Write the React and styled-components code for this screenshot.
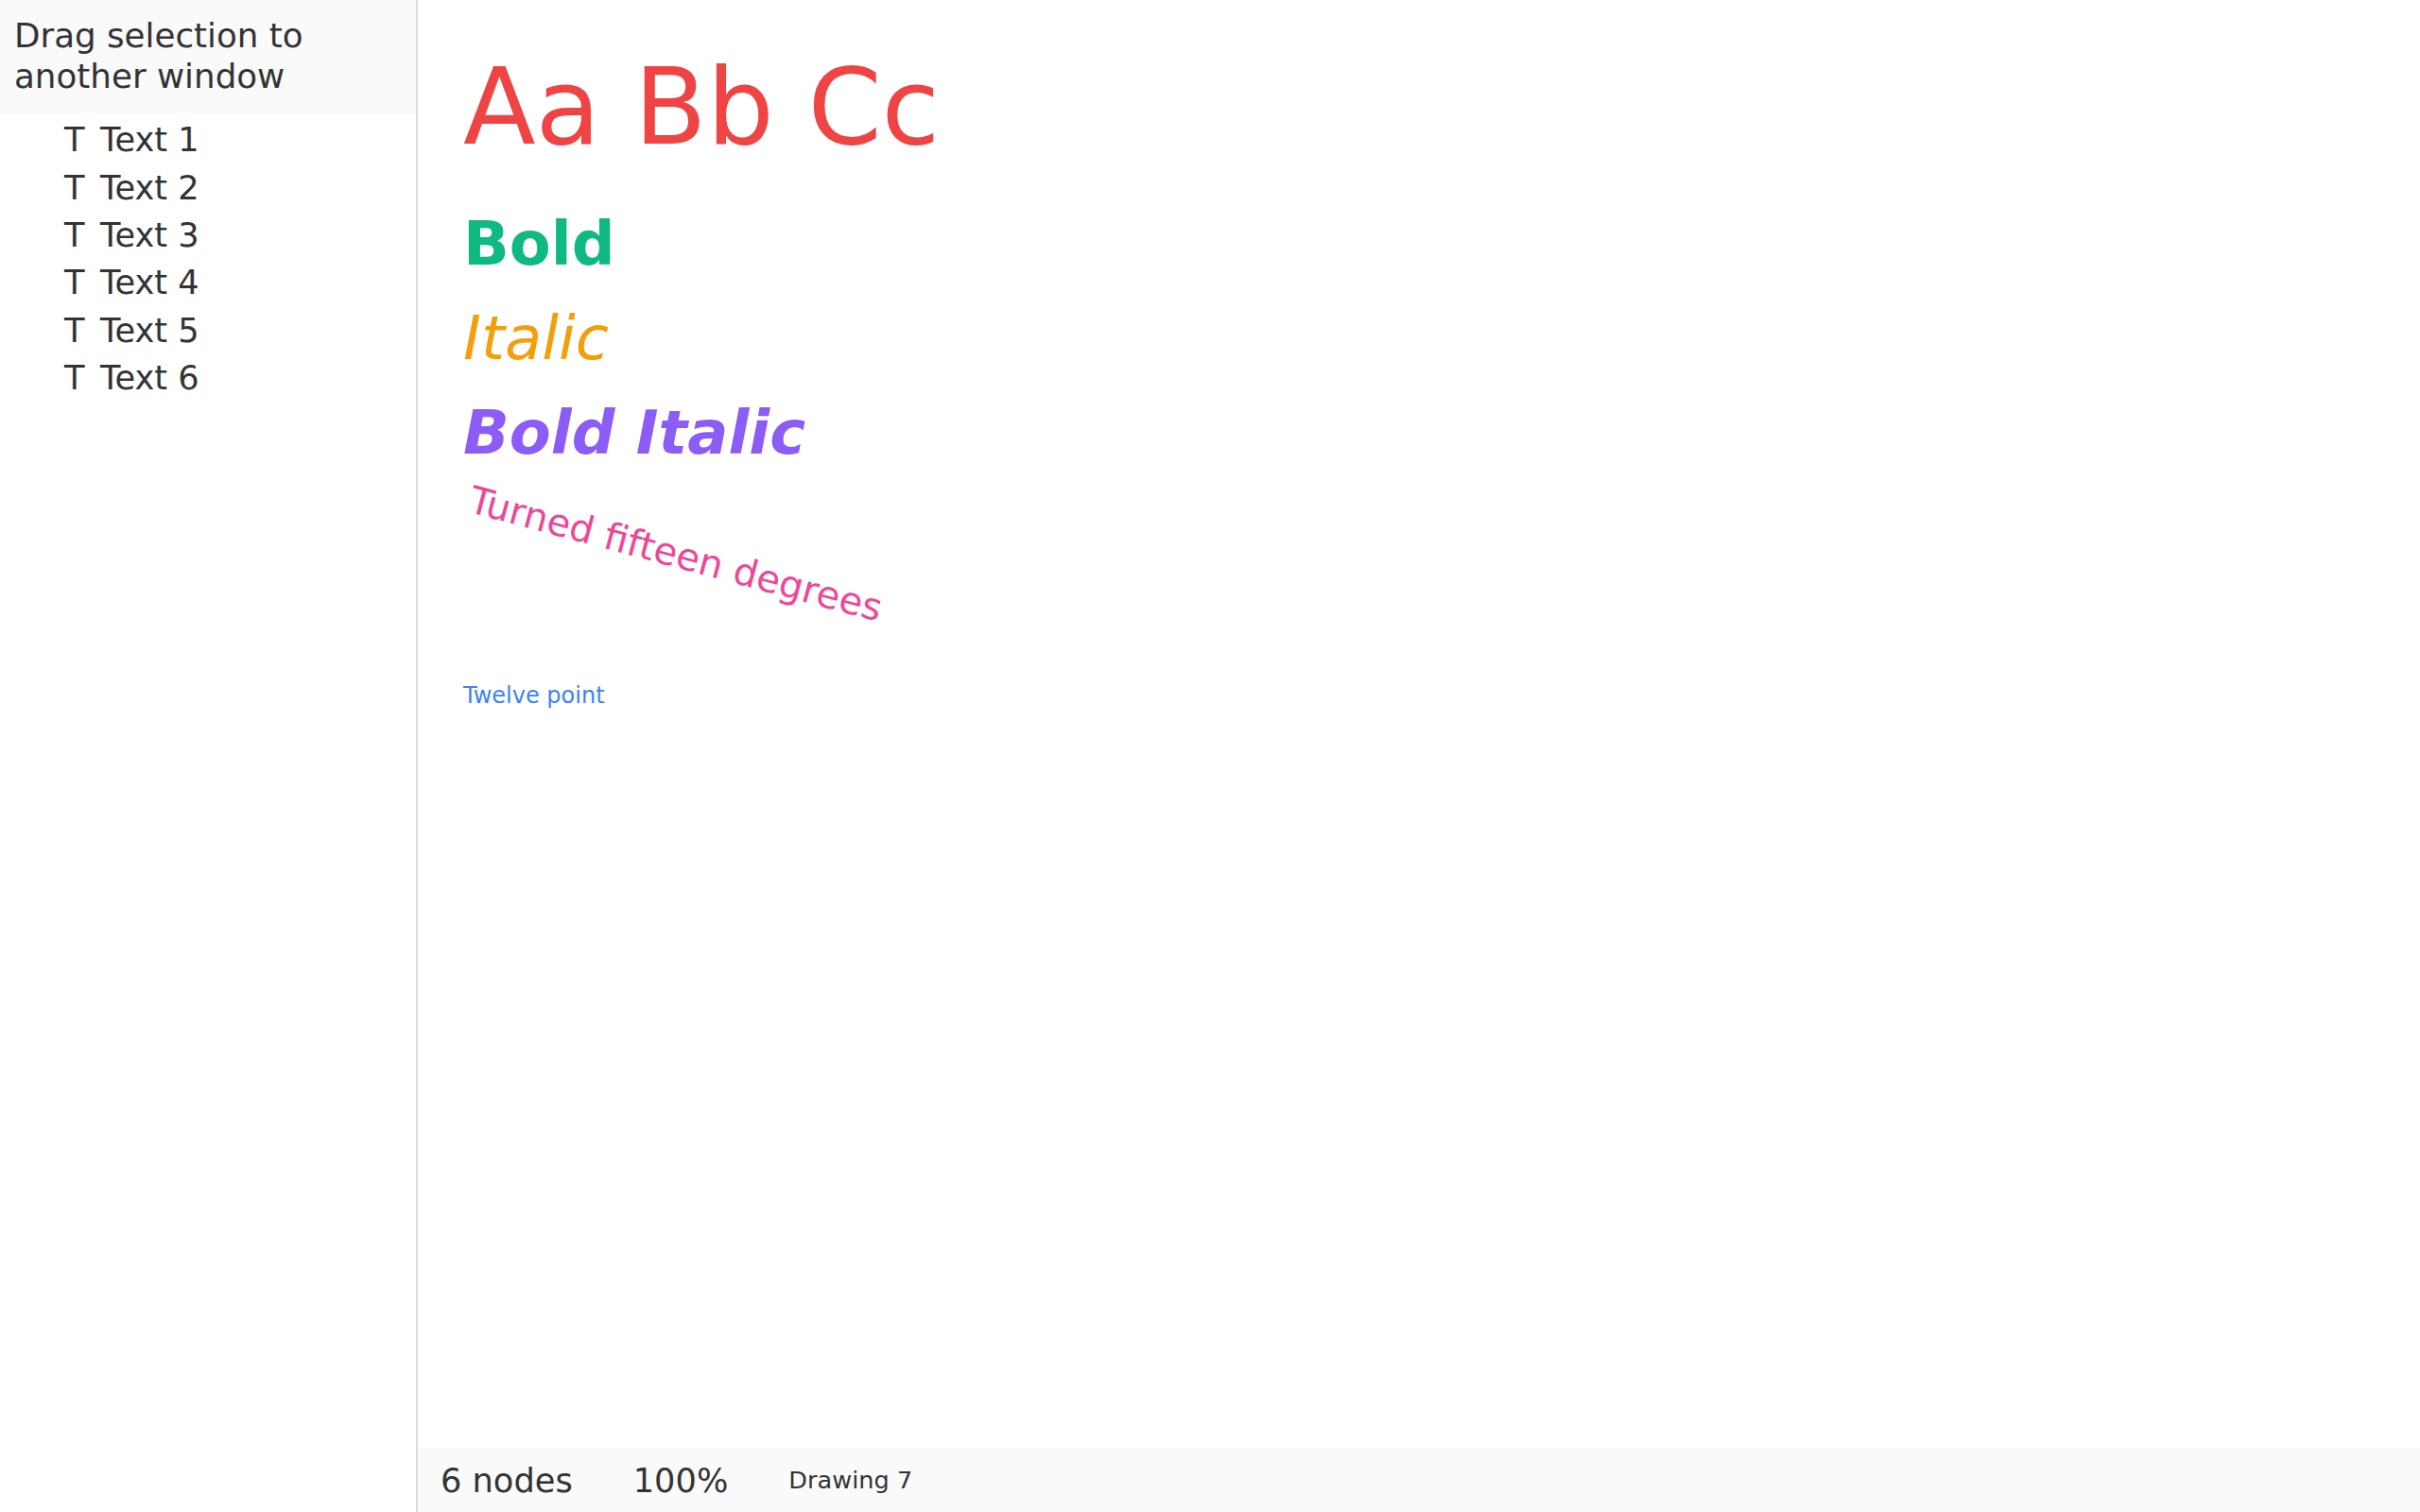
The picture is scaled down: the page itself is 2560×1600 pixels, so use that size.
import React from 'react';
import styled, { createGlobalStyle } from 'styled-components';

const GlobalStyle = createGlobalStyle`
  html, body {
    margin: 0;
    padding: 0;
    height: 100%;
  }
  body {
    font-family: "DejaVu Sans", "Noto Sans", sans-serif;
    color: #333;
    background: #fff;
  }
  #root {
    height: 100%;
  }
`;

const nodes = [
  { id: 1, text: 'Aa Bb Cc', color: '#ef4444', size: 112, x: 48, y: 48 },
  { id: 2, text: 'Bold', color: '#10b981', size: 64, x: 48, y: 221, weight: 700 },
  { id: 3, text: 'Italic', color: '#f59e0b', size: 64, x: 48, y: 321, italic: true },
  { id: 4, text: 'Bold Italic', color: '#8b5cf6', size: 64, x: 48, y: 421, weight: 700, italic: true },
  { id: 5, text: 'Turned fifteen degrees', color: '#ec4899', size: 40, x: 48, y: 563, rotate: 15 },
  { id: 6, text: 'Twelve point', color: '#3b82f6', size: 24, x: 48, y: 722 },
];

const Shell = styled.div`
  display: flex;
  width: 100vw;
  height: 100vh;
  overflow: hidden;
`;

const Sidebar = styled.aside`
  width: 440px;
  flex-shrink: 0;
  border-right: 2px solid #dcdcdc;
  display: flex;
  flex-direction: column;
`;

const DragHint = styled.div`
  height: 120px;
  box-sizing: border-box;
  padding: 17px 15px 0;
  background: #fafafa;
  font-size: 35.7px;
  line-height: 42.5px;
  color: #333;
`;

const NodeList = styled.ul`
  list-style: none;
  margin: 0;
  padding: 3px 0 0;
`;

const NodeRow = styled.li`
  display: flex;
  align-items: center;
  gap: 16px;
  height: 50.4px;
  padding-left: 68px;
  font-size: 35.2px;
  line-height: 42px;
  color: #333;
  cursor: default;
`;

const TypeGlyph = styled.span`
  width: 22px;
  flex-shrink: 0;
`;

const Main = styled.main`
  flex: 1;
  display: flex;
  flex-direction: column;
  min-width: 0;
`;

const Canvas = styled.div`
  position: relative;
  flex: 1;
  background: #fff;
  overflow: hidden;
`;

const TextNode = styled.div`
  position: absolute;
  white-space: nowrap;
  line-height: normal;
  font-family: "DejaVu Sans", sans-serif;
  color: ${(p) => p.$color};
  font-size: ${(p) => p.$size}px;
  font-weight: ${(p) => p.$weight || 400};
  font-style: ${(p) => (p.$italic ? 'italic' : 'normal')};
  transform: ${(p) => (p.$rotate ? `rotate(${p.$rotate}deg)` : 'none')};
`;

const StatusBar = styled.footer`
  height: 68px;
  flex-shrink: 0;
  display: flex;
  align-items: center;
  gap: 64px;
  padding: 0 24px;
  background: #fafafa;
  color: #333;
`;

const StatusItem = styled.span`
  font-size: ${(p) => p.$size || 35.2}px;
`;

export default function App() {
  return (
    <>
      <GlobalStyle />
      <Shell>
        <Sidebar>
          <DragHint>Drag selection to another window</DragHint>
          <NodeList>
            {nodes.map((n) => (
              <NodeRow key={n.id}>
                <TypeGlyph>T</TypeGlyph>
                <span>Text {n.id}</span>
              </NodeRow>
            ))}
          </NodeList>
        </Sidebar>
        <Main>
          <Canvas>
            {nodes.map((n) => (
              <TextNode
                key={n.id}
                $color={n.color}
                $size={n.size}
                $weight={n.weight}
                $italic={n.italic}
                $rotate={n.rotate}
                style={{ left: n.x, top: n.y }}
              >
                {n.text}
              </TextNode>
            ))}
          </Canvas>
          <StatusBar>
            <StatusItem>6 nodes</StatusItem>
            <StatusItem>100%</StatusItem>
            <StatusItem $size={25.6}>Drawing 7</StatusItem>
          </StatusBar>
        </Main>
      </Shell>
    </>
  );
}
